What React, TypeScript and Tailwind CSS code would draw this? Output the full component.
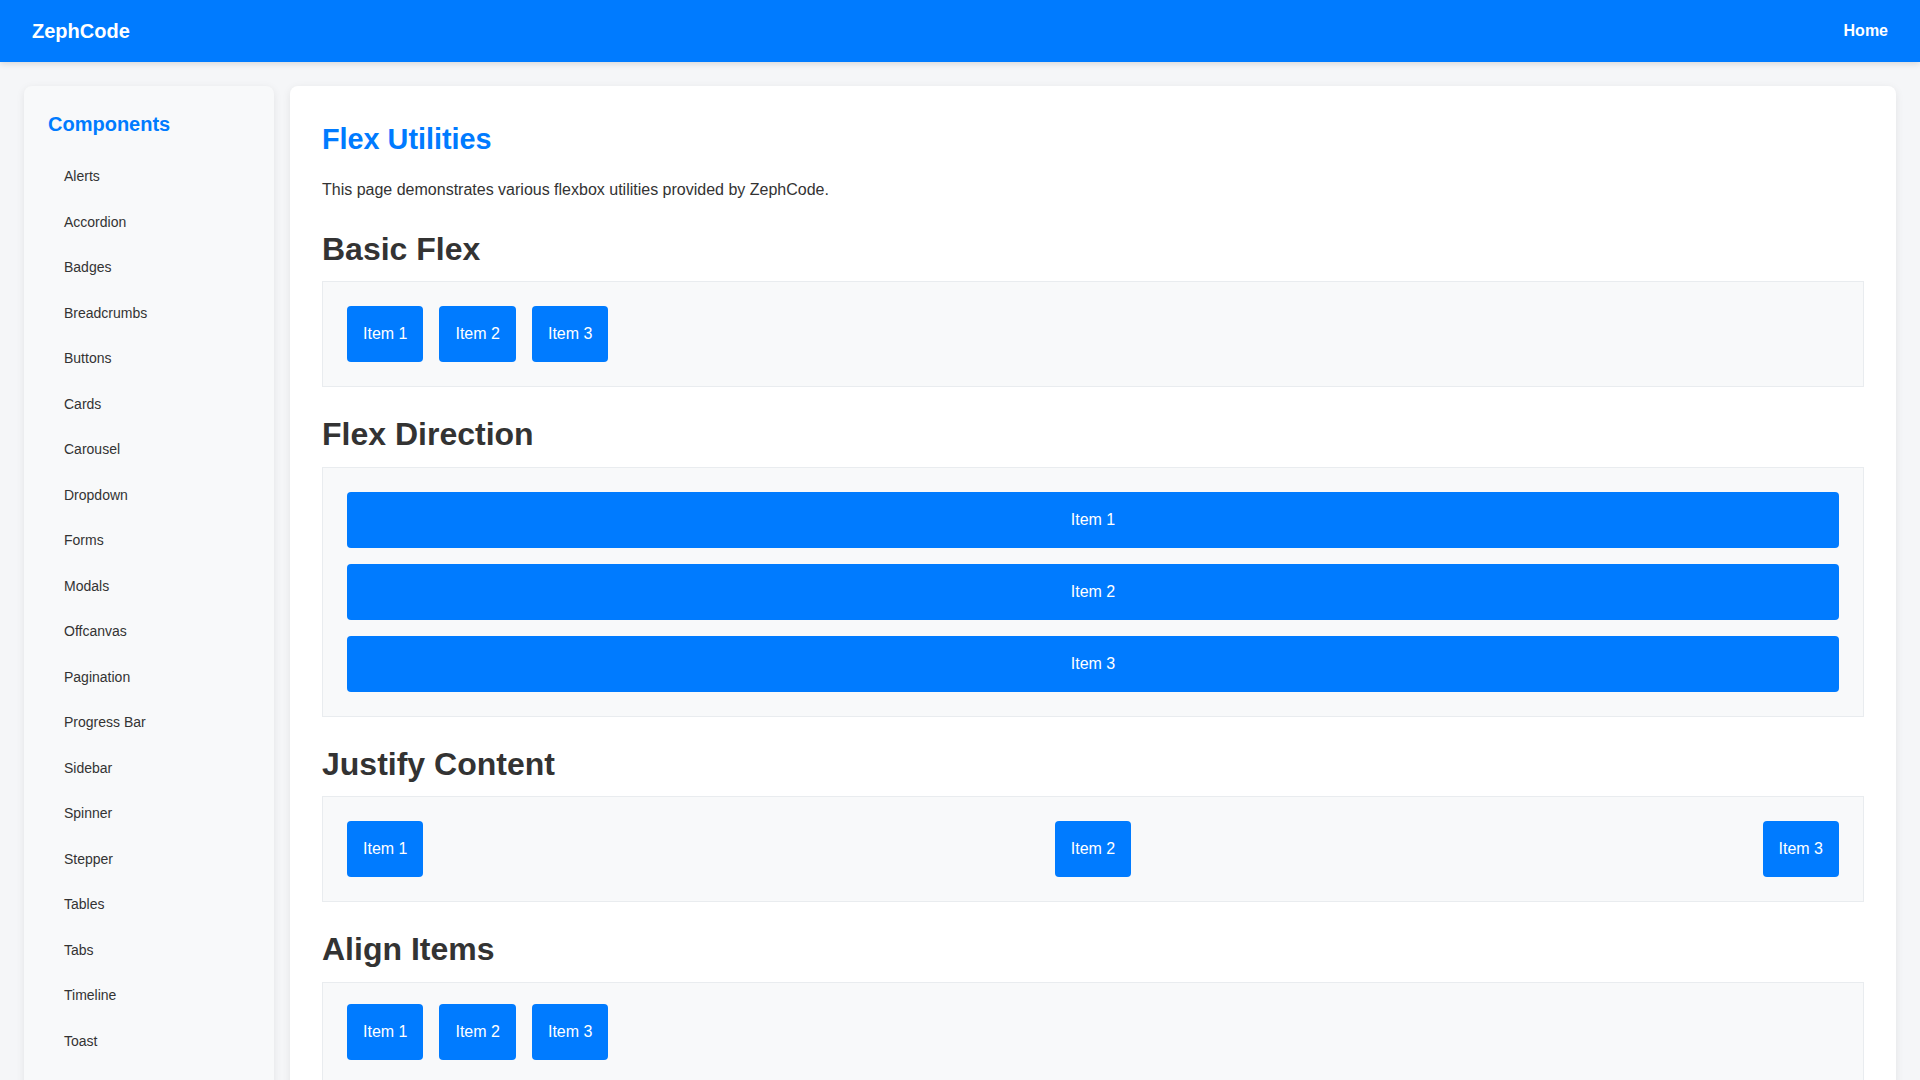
const navItems = [
  'Alerts',
  'Accordion',
  'Badges',
  'Breadcrumbs',
  'Buttons',
  'Cards',
  'Carousel',
  'Dropdown',
  'Forms',
  'Modals',
  'Offcanvas',
  'Pagination',
  'Progress Bar',
  'Sidebar',
  'Spinner',
  'Stepper',
  'Tables',
  'Tabs',
  'Timeline',
  'Toast',
];

function Item({ label, full }: { label: string; full?: boolean }) {
  return (
    <div
      className={`bg-[#007bff] text-white text-[16px] leading-[24px] px-4 py-4 rounded-[4px] text-center ${full ? 'w-full' : ''}`}
    >
      {label}
    </div>
  );
}

function Section({ title, children }: { title: string; children: React.ReactNode }) {
  return (
    <section>
      <h2 className="mt-[28px] mb-[13px] text-[32px] leading-[38.4px] font-bold text-[#333]">{title}</h2>
      {children}
    </section>
  );
}

const boxCls = 'bg-[#f8f9fa] border border-[#e9ecef] p-6';

export default function App() {
  return (
    <div className="min-h-screen bg-[#f5f6f8] text-[#333]" style={{ fontFamily: '"Liberation Sans", Arial, sans-serif' }}>
      <header className="h-[62px] bg-[#007bff] flex items-center justify-between px-8 shadow-[0_2px_6px_rgba(0,0,0,0.12)] relative z-10">
        <span className="text-white text-[20px] font-bold">ZephCode</span>
        <nav>
          <a className="text-white text-[16px] font-bold">Home</a>
        </nav>
      </header>

      <div className="flex items-start gap-4 px-6 pt-6 pb-6">
        <aside className="w-[250px] shrink-0 bg-[#f8f9fa] rounded-lg shadow-[0_2px_8px_rgba(0,0,0,0.08)] px-6 pt-6 pb-10">
          <h3 className="text-[20px] leading-[28px] font-bold text-[#007bff] mb-4">Components</h3>
          <ul>
            {navItems.map(n => (
              <li key={n} className="pl-4 py-[12px] text-[14px] leading-[21.5px] text-[#333]">
                {n}
              </li>
            ))}
          </ul>
        </aside>

        <main className="flex-1 bg-white rounded-lg shadow-[0_2px_8px_rgba(0,0,0,0.08)] px-8 pt-[33px] pb-16">
          <h1 className="text-[28.8px] leading-[40px] font-bold text-[#007bff] mb-[19px]">Flex Utilities</h1>
          <p className="text-[16px] leading-[24px] text-[#333]">
            This page demonstrates various flexbox utilities provided by ZephCode.
          </p>

          <Section title="Basic Flex">
            <div className={`${boxCls} flex gap-4`}>
              <Item label="Item 1" />
              <Item label="Item 2" />
              <Item label="Item 3" />
            </div>
          </Section>

          <Section title="Flex Direction">
            <div className={`${boxCls} flex flex-col gap-4`}>
              <Item label="Item 1" full />
              <Item label="Item 2" full />
              <Item label="Item 3" full />
            </div>
          </Section>

          <Section title="Justify Content">
            <div className={`${boxCls} flex justify-between`}>
              <Item label="Item 1" />
              <Item label="Item 2" />
              <Item label="Item 3" />
            </div>
          </Section>

          <Section title="Align Items">
            <div className={`${boxCls} flex items-center gap-4 h-[100px]`}>
              <Item label="Item 1" />
              <Item label="Item 2" />
              <Item label="Item 3" />
            </div>
          </Section>
        </main>
      </div>
    </div>
  );
}
